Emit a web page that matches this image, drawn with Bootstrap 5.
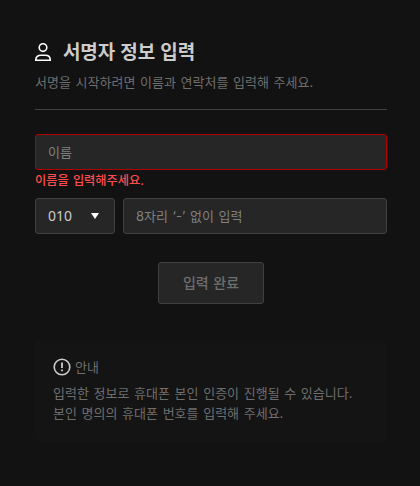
<!DOCTYPE html>
<html lang="ko" data-bs-theme="dark">
<head>
<meta charset="utf-8">
<meta name="viewport" content="width=device-width, initial-scale=1">
<title>서명자 정보 입력</title>
<link href="https://cdn.jsdelivr.net/npm/bootstrap@5.3.0/dist/css/bootstrap.min.css" rel="stylesheet">
<style>
body{background:#121212;color:#6e6e6e;font:400 13px/20px Inter,"Noto Sans CJK KR",sans-serif;word-spacing:1px;overflow:hidden}
.signer{padding:39px 33px 0 35px}
.signer-head{padding-bottom:17px;border-bottom:1px solid #404040}
.signer-title{padding-top:1px;font-size:19px;line-height:25px;font-weight:700;letter-spacing:-.15px;color:#ccc}
.signer-icon{margin-right:12px}
.signer-lead{margin:7px 0 0}
.field,.field:focus{height:36px;padding:0 12px;border:1px solid #404040;border-radius:3px;background:#262626;color:#ccc;font-size:13px;line-height:20px;word-spacing:1px;box-shadow:none}
.field::placeholder{color:#808080;opacity:1}
.field.field-error{border-color:#b50000}
.error-text{padding-top:1px;font-size:12.2px;line-height:19px;font-weight:500;color:#ff4d4d}
.code-field,.code-field:focus{width:80px;font-family:"Noto Sans",sans-serif;font-size:14px;text-align:left}
.submit-btn,.submit-btn:disabled{width:106px;height:42px;margin:28px 0;border:1px solid #404040;border-radius:3px;background:#262626;color:#6e6e6e;opacity:1;font-size:14px;font-weight:500;line-height:20px;word-spacing:.8px}
.notice{height:102px;padding:18px;border-radius:6px;background:#141414}
.notice-head{height:18px}
.notice-text{margin:7px 0 0}
</style>
</head>
<body>
<main class="signer">
  <header class="signer-head">
    <div class="d-flex align-items-center">
      <svg class="signer-icon" width="16" height="18" viewBox="0 0 16 18" fill="none" stroke="#fff" stroke-width="1.6"><circle cx="8" cy="4.6" r="3.8"/><path d="M.8 17.2v-.6c0-2.8 2.2-4.4 5-4.4h4.4c2.8 0 5 1.6 5 4.4v.6z"/></svg>
      <h1 class="signer-title mb-0">서명자 정보 입력</h1>
    </div>
    <p class="signer-lead">서명을 시작하려면 이름과 연락처를 입력해 주세요.</p>
  </header>
  <form class="pt-4">
    <input class="form-control field field-error" type="text" placeholder="이름" aria-label="이름">
    <div class="error-text">이름을 입력해주세요.</div>
    <div class="d-flex gap-2 mt-2">
      <button type="button" class="btn field code-field d-flex align-items-center justify-content-between flex-shrink-0">
        <span>010</span>
        <svg width="11" height="8" viewBox="0 0 11 8"><path d="M0 1h8L4 7z" fill="#fff"/></svg>
      </button>
      <input class="form-control field" type="text" placeholder="8자리 ‘-’ 없이 입력" aria-label="휴대폰 번호">
    </div>
    <div class="d-flex justify-content-center">
      <button type="submit" class="btn submit-btn p-0" disabled>입력 완료</button>
    </div>
  </form>
  <section class="notice mt-2">
    <div class="notice-head d-flex align-items-center">
      <svg class="me-1" width="18" height="18" viewBox="0 0 18 18"><circle cx="9" cy="9" r="7.8" fill="none" stroke="#ccc" stroke-width="1.6"/><path d="M8.1 4.6h1.8v5.4H8.1zM8.1 11.5h1.8v1.8H8.1z" fill="#ccc"/></svg>
      <span>안내</span>
    </div>
    <p class="notice-text">입력한 정보로 휴대폰 본인 인증이 진행될 수 있습니다.<br>본인 명의의 휴대폰 번호를 입력해 주세요.</p>
  </section>
</main>
<script src="https://cdn.jsdelivr.net/npm/bootstrap@5.3.0/dist/js/bootstrap.bundle.min.js"></script>
</body>
</html>
